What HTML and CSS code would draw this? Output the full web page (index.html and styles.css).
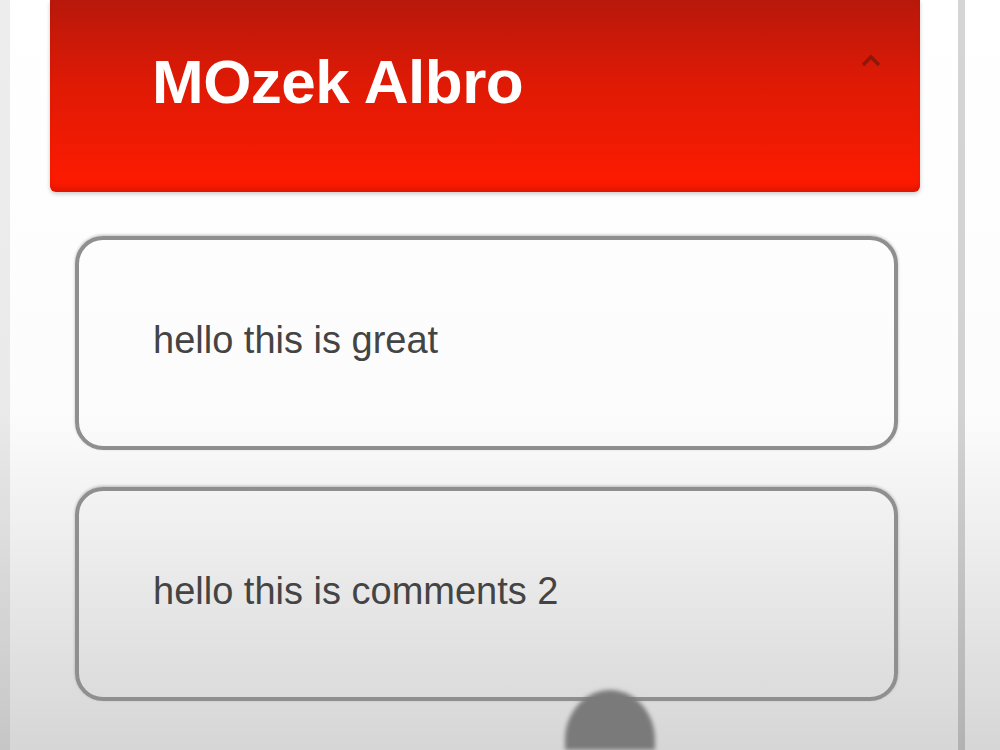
FILE: index.html
```html
<!DOCTYPE html>
<html lang="en">
<head>
    <meta charset="UTF-8">
    <title>Comments</title>
    <link rel="stylesheet" href="styles.css">
</head>
<body>

    <div class="frame">
        <div class="header">
            <h1>MOzek Albro</h1>
            <svg class="caret" width="26" height="16" viewBox="0 0 26 16">
                <polyline points="5,13 13,5 21,13" fill="none" stroke="#8e170b" stroke-width="3.5"/>
            </svg>
        </div>

        <div class="comments">
            <div class="comment">hello this is great</div>
            <div class="comment">hello this is comments 2</div>
        </div>
    </div>

    <div class="touch"></div>

</body>
</html>
```

FILE: styles.css
```css
html, body {
    height: 100%;
    overflow: hidden;
}

body {
    margin: 0;
    font-family: 'Liberation Sans', Arial, sans-serif;
    background: linear-gradient(to bottom, #ffffff 0%, #fcfcfc 55%, #d6d6d6 100%);
}

.frame {
    margin-right: 35px;
    height: 750px;
    box-sizing: border-box;
    border-left: 10px solid rgba(0, 0, 0, 0.07);
    border-right: 7px solid rgba(0, 0, 0, 0.16);
}

.header {
    margin: 0 38px 0 40px;
    height: 192px;
    padding-left: 102px;
    display: flex;
    align-items: flex-start;
    justify-content: space-between;
    background: linear-gradient(to bottom, #b8180b 0%, #e01a05 45%, #ff1b00 100%);
    border-radius: 0 0 6px 6px;
    box-shadow: inset 0 -8px 6px -4px rgba(120, 0, 0, 0.25), 0 2px 4px rgba(0, 0, 0, 0.2);
    box-sizing: border-box;
}

.header h1 {
    margin: 50px 0 0;
    color: #fff;
    font-size: 62px;
    font-weight: bold;
    letter-spacing: -0.5px;
    line-height: 64px;
}

.caret {
    margin: 52px 36px 0 0;
}

.comments {
    margin: 44px 60px 0 65px;
    display: flex;
    flex-direction: column;
    gap: 37px;
}

.comment {
    height: 214px;
    box-sizing: border-box;
    padding: 0 0 6px 74px;
    display: flex;
    align-items: center;
    border: 4px solid #8f8f8f;
    border-radius: 28px;
    box-shadow: 0 -1px 3px rgba(0, 0, 0, 0.25);
    color: #444;
    font-size: 38px;
}

.touch {
    position: absolute;
    left: 565px;
    top: 690px;
    width: 90px;
    height: 60px;
    border-radius: 45px 45px 0 0 / 50px 50px 0 0;
    background: #7a7a7a;
    filter: blur(2px);
}
```
